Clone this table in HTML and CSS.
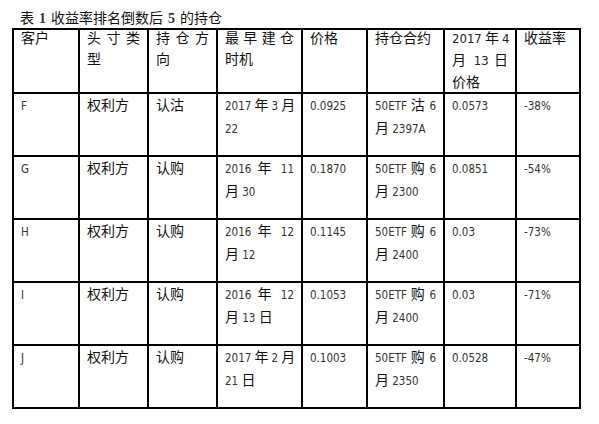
FILE: index.html
```html
<!DOCTYPE html>
<html lang="zh-CN">
<head>
<meta charset="utf-8">
<title>表 1 收益率排名倒数后 5 的持仓</title>
<link rel="stylesheet" href="styles.css">
</head>
<body>
<div class="title">表<span class="tn"> 1 </span>收益率排名倒数后<span class="tn"> 5 </span>的持仓</div>
<table class="grid">
  <colgroup>
    <col class="c1"><col class="c2"><col class="c3"><col class="c4">
    <col class="c5"><col class="c6"><col class="c7"><col class="c8">
  </colgroup>
  <thead>
    <tr class="head">
      <th><div class="hc"><div class="ln">客户</div></div></th>
      <th><div class="hc"><div class="ln j">头 寸 类</div><div class="ln">型</div></div></th>
      <th><div class="hc"><div class="ln j">持 仓 方</div><div class="ln">向</div></div></th>
      <th><div class="hc"><div class="ln j">最 早 建 仓</div><div class="ln">时机</div></div></th>
      <th><div class="hc"><div class="ln">价格</div></div></th>
      <th><div class="hc"><div class="ln">持仓合约</div></div></th>
      <th><div class="hc"><div class="ln j"><span class="hn">2017</span> 年 <span class="hn">4</span></div><div class="ln j">月 <span class="hn">13</span> 日</div><div class="ln">价格</div></div></th>
      <th><div class="hc"><div class="ln">收益率</div></div></th>
    </tr>
  </thead>
  <tbody>
    <tr>
      <td><div class="ln"><span class="n">F</span></div></td>
      <td><div class="ln">权利方</div></td>
      <td><div class="ln">认沽</div></td>
      <td><div class="ln j"><span class="n">2017</span> 年 <span class="n">3</span> 月</div><div class="ln"><span class="n">22</span></div></td>
      <td><div class="ln"><span class="n">0.0925</span></div></td>
      <td><div class="ln j"><span class="n">50ETF</span> 沽 <span class="n">6</span></div><div class="ln">月<span class="n"> 2397A</span></div></td>
      <td><div class="ln"><span class="n">0.0573</span></div></td>
      <td><div class="ln"><span class="n">-38%</span></div></td>
    </tr>
    <tr>
      <td><div class="ln"><span class="n">G</span></div></td>
      <td><div class="ln">权利方</div></td>
      <td><div class="ln">认购</div></td>
      <td><div class="ln j"><span class="n">2016</span> 年 <span class="n">11</span></div><div class="ln">月<span class="n"> 30</span></div></td>
      <td><div class="ln"><span class="n">0.1870</span></div></td>
      <td><div class="ln j"><span class="n">50ETF</span> 购 <span class="n">6</span></div><div class="ln">月<span class="n"> 2300</span></div></td>
      <td><div class="ln"><span class="n">0.0851</span></div></td>
      <td><div class="ln"><span class="n">-54%</span></div></td>
    </tr>
    <tr>
      <td><div class="ln"><span class="n">H</span></div></td>
      <td><div class="ln">权利方</div></td>
      <td><div class="ln">认购</div></td>
      <td><div class="ln j"><span class="n">2016</span> 年 <span class="n">12</span></div><div class="ln">月<span class="n"> 12</span></div></td>
      <td><div class="ln"><span class="n">0.1145</span></div></td>
      <td><div class="ln j"><span class="n">50ETF</span> 购 <span class="n">6</span></div><div class="ln">月<span class="n"> 2400</span></div></td>
      <td><div class="ln"><span class="n">0.03</span></div></td>
      <td><div class="ln"><span class="n">-73%</span></div></td>
    </tr>
    <tr>
      <td><div class="ln"><span class="n">I</span></div></td>
      <td><div class="ln">权利方</div></td>
      <td><div class="ln">认购</div></td>
      <td><div class="ln j"><span class="n">2016</span> 年 <span class="n">12</span></div><div class="ln">月<span class="n"> 13 </span>日</div></td>
      <td><div class="ln"><span class="n">0.1053</span></div></td>
      <td><div class="ln j"><span class="n">50ETF</span> 购 <span class="n">6</span></div><div class="ln">月<span class="n"> 2400</span></div></td>
      <td><div class="ln"><span class="n">0.03</span></div></td>
      <td><div class="ln"><span class="n">-71%</span></div></td>
    </tr>
    <tr>
      <td><div class="ln"><span class="n">J</span></div></td>
      <td><div class="ln">权利方</div></td>
      <td><div class="ln">认购</div></td>
      <td><div class="ln j"><span class="n">2017</span> 年 <span class="n">2</span> 月</div><div class="ln"><span class="n">21 </span>日</div></td>
      <td><div class="ln"><span class="n">0.1003</span></div></td>
      <td><div class="ln j"><span class="n">50ETF</span> 购 <span class="n">6</span></div><div class="ln">月<span class="n"> 2350</span></div></td>
      <td><div class="ln"><span class="n">0.0528</span></div></td>
      <td><div class="ln"><span class="n">-47%</span></div></td>
    </tr>
  </tbody>
</table>
</body>
</html>
```

FILE: styles.css
```css
html, body {
  margin: 0;
  padding: 0;
  background: #ffffff;
}

body {
  font-family: "Noto Sans CJK SC", "Noto Sans CJK TC", sans-serif;
  font-size: 14px;
  color: #111111;
}

.title {
  padding: 7px 0 0 20px;
  height: 21px;
  line-height: 21px;
  white-space: nowrap;
}

.tn {
  font-family: "Liberation Serif", serif;
  font-size: 14px;
  font-weight: bold;
  color: #333333;
  word-spacing: 1.5px;
}

.grid {
  margin-left: 12px;
  border-collapse: collapse;
  table-layout: fixed;
  width: 569px;
}

.c1 { width: 66px; }
.c2 { width: 69px; }
.c3 { width: 69px; }
.c4 { width: 85px; }
.c5 { width: 65px; }
.c6 { width: 77px; }
.c7 { width: 72px; }
.c8 { width: 64px; }

.grid th,
.grid td {
  border: 2px solid #000000;
  padding: 0 7px;
  vertical-align: top;
  text-align: left;
  font-weight: normal;
  line-height: 21px;
}

.head {
  height: 62px;
}

.grid tbody tr {
  height: 63px;
}

.hc {
  margin-top: -3px;
}

.ln {
  white-space: nowrap;
  text-align: left;
}

.ln.j {
  text-align: justify;
  text-align-last: justify;
}

.n {
  font-family: "DejaVu Sans Condensed", "DejaVu Sans", sans-serif;
  font-stretch: condensed;
  font-size: 11.5px;
  color: #333333;
}

.hn {
  font-family: "DejaVu Sans Condensed", "DejaVu Sans", sans-serif;
  font-stretch: condensed;
  font-size: 13px;
  color: #222222;
}
```
